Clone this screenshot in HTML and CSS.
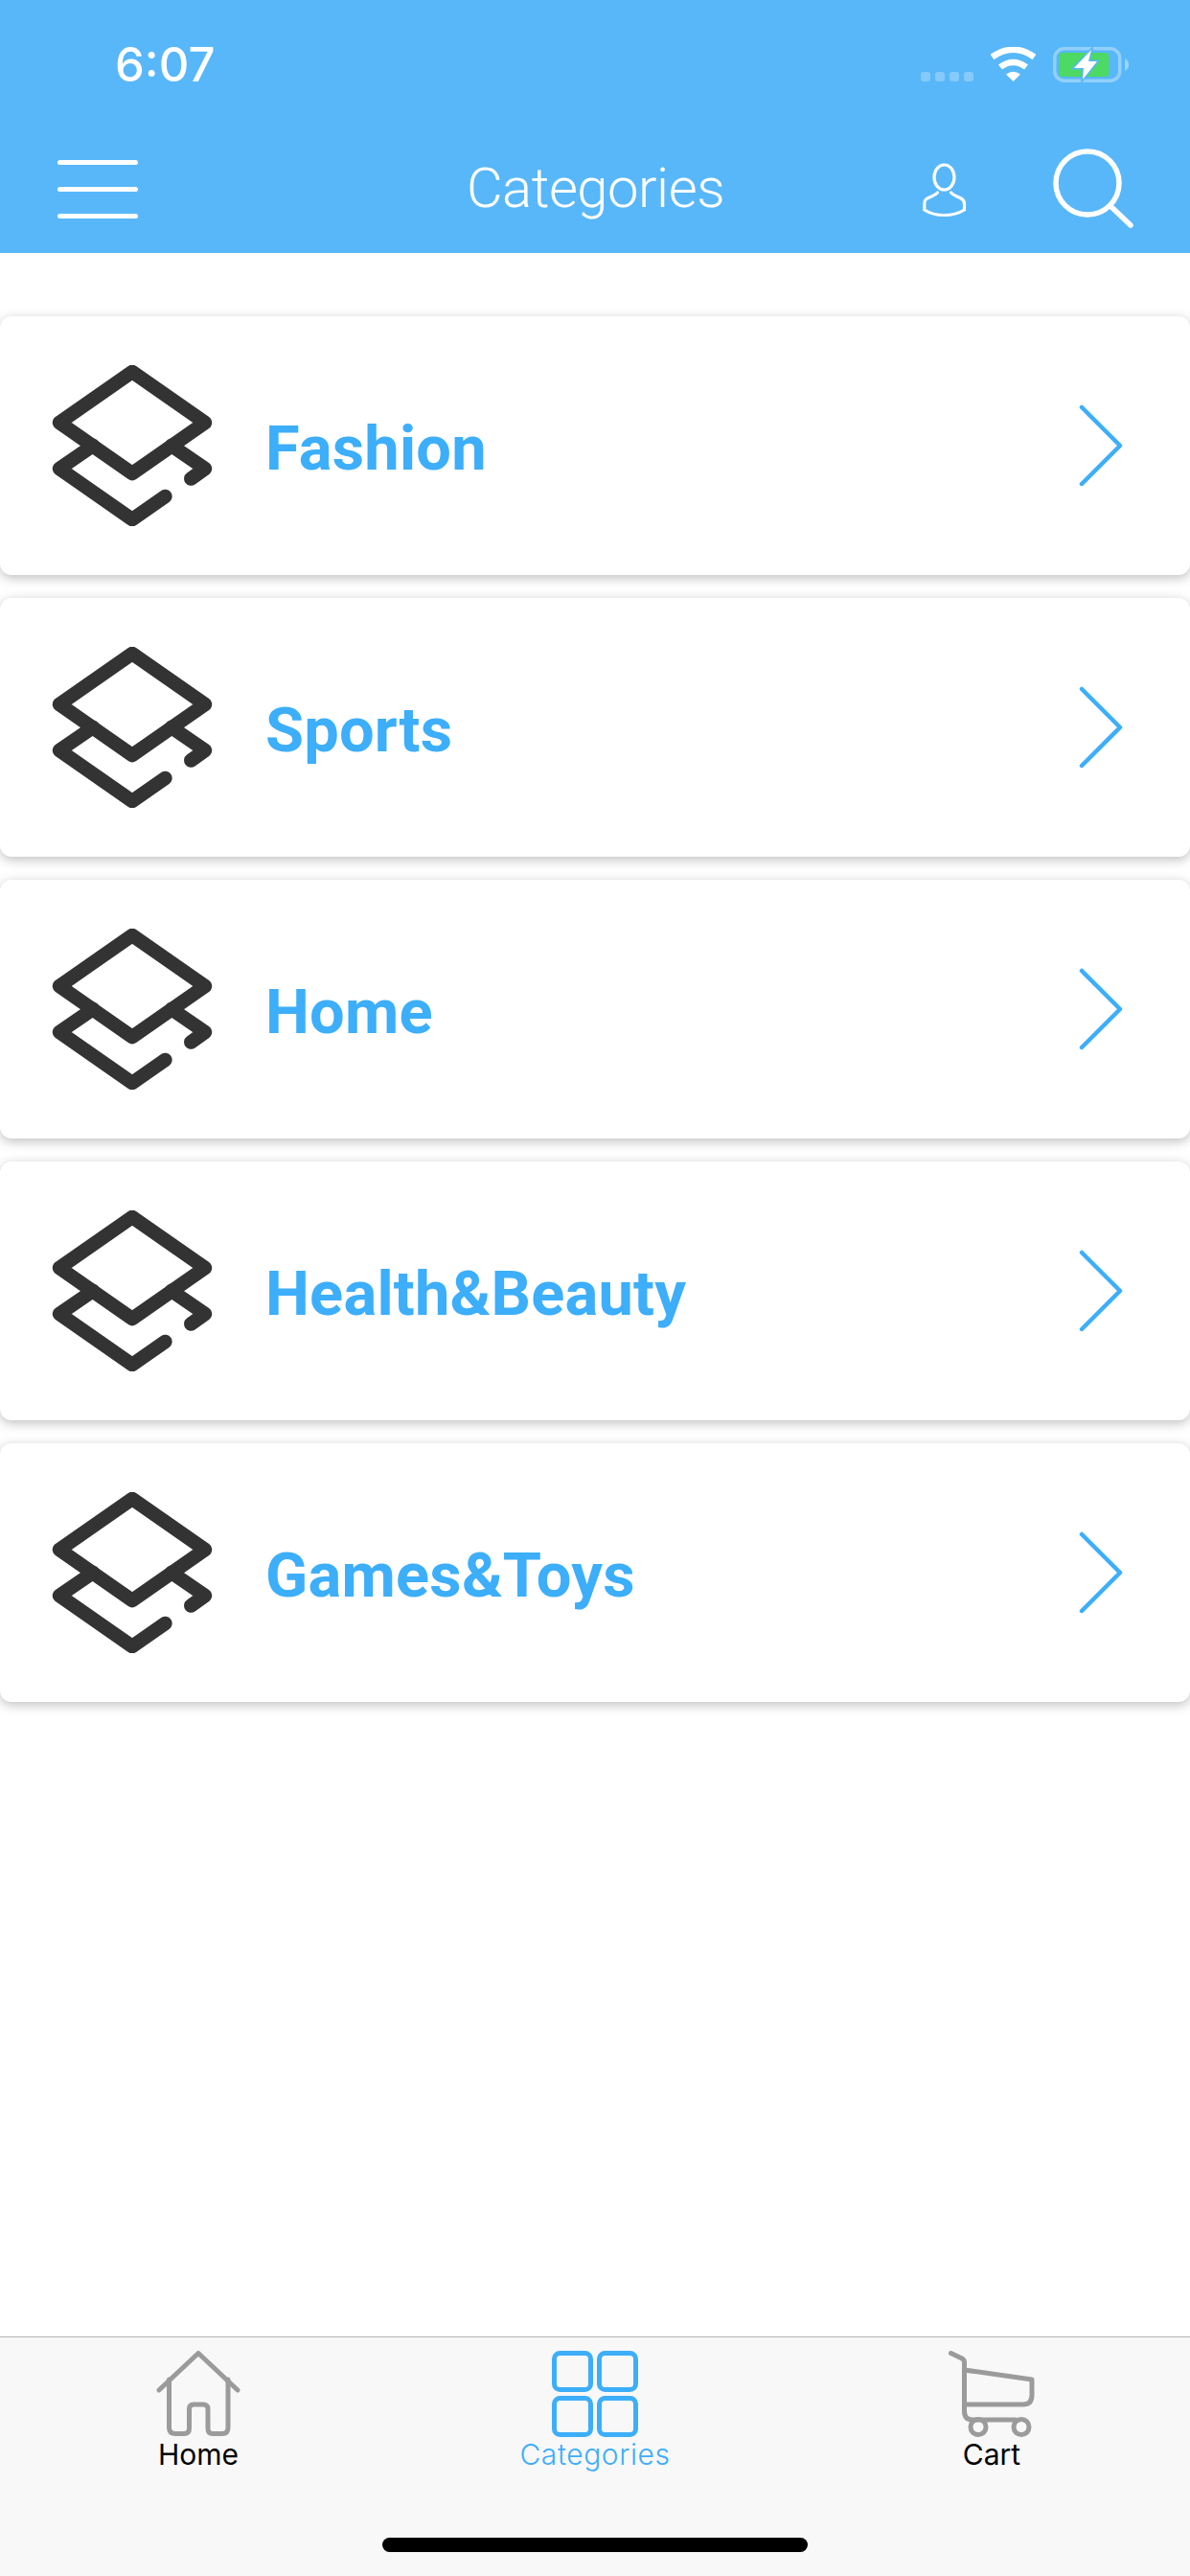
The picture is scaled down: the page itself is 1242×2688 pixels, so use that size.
FILE: index.html
```html
<!DOCTYPE html>
<html lang="en">
<head>
<meta charset="utf-8">
<title>Categories</title>
<link rel="stylesheet" href="styles.css">
</head>
<body>
<svg class="defs" width="0" height="0" aria-hidden="true">
  <symbol id="layers" viewBox="0 0 168 168">
    <path d="M84 7 160 60 84 113 8 60Z"/>
    <path d="M43 84 8 108 84 161 118.400 137"/>
    <path d="M125 84 160 108 145.300 118.500"/>
  </symbol>
  <symbol id="chev" viewBox="0 0 46 88">
    <path d="M3 4 43 44 3 84"/>
  </symbol>
</svg>
<header class="header">
  <div class="status">
    <span class="time">6:07</span>
    <div class="status-icons">
      <div class="signal"><i></i><i></i><i></i><i></i></div>
      <svg class="wifi" width="50" height="37" viewBox="0 0 50 37">
        <path class="wifi-arc" d="M2.500 10.500Q24.500 -5 46.500 10.500"/>
        <path class="wifi-arc" d="M11 21Q24.500 11 38 21"/>
        <path class="wifi-dot" d="M24.500 36 17 28.500Q24.500 23 32 28.500Z"/>
      </svg>
      <svg class="battery" width="80" height="37" viewBox="0 0 80 37">
        <rect class="batt-shell" x="1.750" y="1.750" width="68" height="33.500" rx="10"/>
        <path class="batt-nub" d="M75 12Q79 14 79 18.500Q79 23 75 25Z"/>
        <rect class="batt-fill" x="6" y="6" width="52.500" height="25" rx="4"/>
        <path class="batt-bolt" d="M40 3 22 22H32L31 34 46 15H37Z"/>
      </svg>
    </div>
  </div>
  <nav class="nav">
    <div class="burger"><span></span><span></span><span></span></div>
    <h1 class="title">Categories</h1>
    <div class="nav-actions">
      <svg class="user" width="46" height="58" viewBox="0 0 46 58">
        <ellipse cx="22.500" cy="15" rx="10.500" ry="13"/>
        <path d="M15.500 31C13 34 9 35 5 37 2 38.500 1.800 40 1.800 43V49C8 53 15 54.500 22.500 54.500S37 53 43.500 49V43C43.500 40 43 38.500 40 37 36 35 32 34 29.500 31"/>
      </svg>
      <svg class="search" width="84" height="88" viewBox="0 0 84 88">
        <circle cx="36" cy="38" r="33"/>
        <path d="M60 62 81 82"/>
      </svg>
    </div>
  </nav>
</header>

<main class="list">
  <a class="card"><svg class="layers"><use href="#layers"/></svg><span class="label">Fashion</span><svg class="chev"><use href="#chev"/></svg></a>
  <a class="card"><svg class="layers"><use href="#layers"/></svg><span class="label">Sports</span><svg class="chev"><use href="#chev"/></svg></a>
  <a class="card"><svg class="layers"><use href="#layers"/></svg><span class="label">Home</span><svg class="chev"><use href="#chev"/></svg></a>
  <a class="card"><svg class="layers"><use href="#layers"/></svg><span class="label">Health&amp;Beauty</span><svg class="chev"><use href="#chev"/></svg></a>
  <a class="card"><svg class="layers"><use href="#layers"/></svg><span class="label">Games&amp;Toys</span><svg class="chev"><use href="#chev"/></svg></a>
</main>

<footer class="tabbar">
  <div class="tabs">
    <a class="tab">
      <svg class="tab-icon grey" width="90" height="90" viewBox="0 0 90 90">
        <path d="M4 41 45 2.500 86 41"/>
        <path d="M14.500 30V80Q14.500 86.500 21 86.500H30Q35.500 86.500 35.500 81V61Q35.500 56 40 56H50Q55 56 55 61V81Q55 86.500 60 86.500H70Q76 86.500 76 80V30"/>
      </svg>
      <span class="tab-label">Home</span>
    </a>
    <a class="tab active">
      <svg class="tab-icon blue" width="90" height="90" viewBox="0 0 90 90">
        <rect x="2.500" y="2.500" width="38" height="38" rx="6"/>
        <rect x="49.500" y="2.500" width="38" height="38" rx="6"/>
        <rect x="2.500" y="49.500" width="38" height="38" rx="6"/>
        <rect x="49.500" y="49.500" width="38" height="38" rx="6"/>
      </svg>
      <span class="tab-label">Categories</span>
    </a>
    <a class="tab">
      <svg class="tab-icon grey" width="90" height="90" viewBox="0 0 90 90">
        <path d="M2.500 2.500 14 8Q16.500 9.500 16.500 12V63Q16.500 72 25 72H70"/>
        <path d="M16.500 20 87 30V46Q87 56 78 56H16.500"/>
        <circle cx="31" cy="79.500" r="8"/>
        <circle cx="76" cy="79.500" r="8"/>
      </svg>
      <span class="tab-label">Cart</span>
    </a>
  </div>
  <div class="home-indicator"></div>
</footer>
</body>
</html>
```

FILE: styles.css
```css
* { box-sizing: border-box; }
html, body { margin: 0; padding: 0; }
body {
  width: 1242px;
  height: 2688px;
  display: flex;
  flex-direction: column;
  background: #fff;
  overflow: hidden;
  font-family: "Inter", "Liberation Sans", sans-serif;
}
.defs { position: absolute; }

.header { height: 264px; background: #58b7f9; color: #fff; flex: none; }
.status { height: 130px; display: flex; padding: 49px 63px 0 120px; }
.time { font-size: 49px; line-height: 37px; font-weight: 500; }
.status-icons { margin-left: auto; display: flex; align-items: flex-start; }
.signal { display: flex; gap: 5px; margin: 26px 17px 0 0; }
.signal i { width: 10px; height: 10px; border-radius: 3px; background: rgba(255,255,255,.27); }
.wifi { margin-right: 16px; }
.wifi-arc { fill: none; stroke: #fff; stroke-width: 6.500; }
.wifi-dot { fill: #fff; }
.batt-shell { fill: none; stroke: rgba(255,255,255,.35); stroke-width: 3.500; }
.batt-nub { fill: rgba(255,255,255,.4); }
.batt-fill { fill: #4cd964; }
.batt-bolt { fill: #fff; stroke: #58b7f9; stroke-width: 3; paint-order: stroke; }

.nav { height: 134px; display: grid; grid-template-columns: 1fr auto 1fr; align-items: center; padding: 0 59px 0 60px; }
.burger { display: flex; flex-direction: column; gap: 23px; width: 84px; }
.burger span { height: 5px; border-radius: 3px; background: #fff; }
.title { margin: 0 0 2px; font-family: "Roboto", sans-serif; font-weight: 300; font-size: 58px; letter-spacing: -.5px; line-height: 70px; color: #fff; }
.nav-actions { display: flex; justify-content: flex-end; align-items: flex-start; gap: 90px; }
.user { margin-top: 16.500px; fill: none; stroke: #fff; stroke-width: 3.200; stroke-linecap: round; }
.search { fill: none; stroke: #fff; stroke-width: 5.500; stroke-linecap: round; }

.list { flex: 1; padding-top: 66px; display: flex; flex-direction: column; gap: 24px; }
.card {
  height: 270px;
  display: flex;
  align-items: center;
  padding: 0 70px 0 54px;
  background: #fff;
  border-radius: 12px;
  box-shadow: 0 3px 12px rgba(0,0,0,.26);
}
.layers { width: 168px; height: 168px; fill: none; stroke: #333; stroke-width: 14.500; stroke-linecap: round; stroke-linejoin: round; flex: none; }
.label { margin: 5px 0 0 55px; font-family: "Roboto", sans-serif; font-weight: 700; font-size: 65px; letter-spacing: .2px; line-height: 80px; color: #3daef9; }
.chev { margin-left: auto; width: 46px; height: 88px; fill: none; stroke: #3daef9; stroke-width: 4.500; stroke-linecap: round; stroke-linejoin: round; flex: none; }

.tabbar { height: 250px; flex: none; background: #f8f8f8; border-top: 1.500px solid #b2b2b2; display: flex; flex-direction: column; align-items: center; }
.tabs { width: 100%; display: grid; grid-template-columns: repeat(3, 1fr); padding-top: 14px; }
.tab { display: flex; flex-direction: column; align-items: center; }
.tab-icon { fill: none; stroke-width: 5; stroke-linecap: round; stroke-linejoin: round; }
.tab-icon.grey { stroke: #9b9b9b; }
.tab-icon.blue { stroke: #3daef9; }
.tab-label { font-size: 30px; line-height: 36px; color: #000; }
.tab.active .tab-label { color: #3daef9; font-weight: 300; letter-spacing: .6px; }
.home-indicator { margin-top: 69px; width: 444px; height: 15px; border-radius: 8px; background: #000; }
```
